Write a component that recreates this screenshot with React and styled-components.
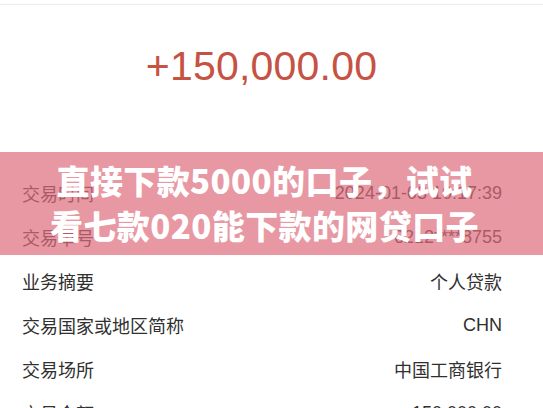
import React from 'react'
import styled, { createGlobalStyle } from 'styled-components'

const Global = createGlobalStyle`
  html, body {
    margin: 0;
    padding: 0;
    background: #fff;
    overflow: hidden;
  }
  body {
    font-family: "Liberation Sans", "Noto Sans CJK SC", sans-serif;
  }
`

const Page = styled.div`
  position: relative;
  width: 543px;
  height: 408px;
  overflow: hidden;
  background: #fff;
  padding-top: 4px;
  box-sizing: border-box;
`

const Header = styled.div`
  border-top: 1px solid #ededed;
  height: 167px;
  display: flex;
  justify-content: center;
  padding: 37px 20px 0 0;
  box-sizing: border-box;
`

const Amount = styled.div`
  font-size: 41px;
  color: #c65244;
  letter-spacing: 0.2px;
  line-height: 48px;
`

const List = styled.div`
  display: flex;
  flex-direction: column;
  padding: 0 41px 0 22px;
`

const Row = styled.div`
  height: 44px;
  display: flex;
  align-items: center;
  justify-content: space-between;
  font-size: 18px;
  color: #303030;
  font-family: "Liberation Sans", "Noto Sans CJK SC", sans-serif;
`

const Label = styled.span``
const Value = styled.span``

const Banner = styled.div`
  position: absolute;
  left: 0;
  right: 0;
  top: 152px;
  height: 103px;
  background: rgba(221, 108, 124, 0.7);
  display: flex;
  flex-direction: column;
  align-items: center;
  justify-content: center;
  color: #fff;
  font-family: "Noto Sans CJK SC", "Noto Sans", sans-serif;
  font-weight: 900;
  font-size: 33px;
  line-height: 45px;
  letter-spacing: 0.4px;
  padding: 0 14px 2px 0;
  box-sizing: border-box;
`

const rows = [
  ['交易时间', '2024-01-03 10:17:39'],
  ['交易单号', '6212****8755'],
  ['业务摘要', '个人贷款'],
  ['交易国家或地区简称', 'CHN'],
  ['交易场所', '中国工商银行'],
  ['交易金额', '150,000.00']
]

export default function App () {
  return (
    <Page>
      <Global />
      <Header>
        <Amount>+150,000.00</Amount>
      </Header>
      <List>
        {rows.map(([k, v]) => (
          <Row key={k}>
            <Label>{k}</Label>
            <Value>{v}</Value>
          </Row>
        ))}
      </List>
      <Banner>
        <div>直接下款5000的口子，试试</div>
        <div>看七款020能下款的网贷口子</div>
      </Banner>
    </Page>
  )
}
